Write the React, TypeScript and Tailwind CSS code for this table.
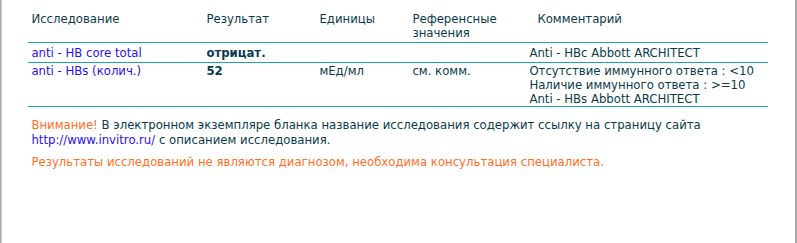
import React from "react";

const rows = [
  {
    name: "anti - HB core total",
    result: "отрицат.",
    units: "",
    ref: "",
    comment: ["Anti - HBc Abbott ARCHITECT"],
  },
  {
    name: "anti - HBs (колич.)",
    result: "52",
    units: "мЕд/мл",
    ref: "см. комм.",
    comment: [
      "Отсутствие иммунного ответа : <10",
      "Наличие иммунного ответа : >=10",
      "Anti - HBs Abbott ARCHITECT",
    ],
  },
];

export default function App() {
  return (
    <div
      className="w-[797px] h-[243px] bg-white flex text-[#0b3b4b] text-[13px] leading-[14px]"
      style={{ fontFamily: '"DejaVu Sans Condensed", "DejaVu Sans", sans-serif' }}
    >
      <div className="w-[3px] bg-gradient-to-r from-[#a0a0a0] to-[#d8d8d8]" />
      <div className="flex-1 pl-[26px] pr-[27px]">
        <div className="w-[740px]">
          <div className="grid grid-cols-[175px_113px_93px_117px_242px] pt-[12px] pb-[2px] border-b border-[#1fa3b3]">
            <div className="pl-[3px]">Исследование</div>
            <div className="pl-[3px]">Результат</div>
            <div className="pl-[3px]">Единицы</div>
            <div className="pl-[3px]">Референсные<br />значения</div>
            <div className="pl-[11px]">Комментарий</div>
          </div>
          {rows.map((r, i) => (
            <div
              key={i}
              className={`grid grid-cols-[175px_113px_93px_117px_242px] border-b border-[#1fa3b3] ${i === 0 ? "pt-[3px] pb-[2px]" : "pt-[1px] pb-0"}`}
            >
              <div className="pl-[3px] text-[#2a10f0]">{r.name}</div>
              <div className="pl-[3px] font-bold">{r.result}</div>
              <div className="pl-[3px]">{r.units}</div>
              <div className="pl-[3px]">{r.ref}</div>
              <div className="pl-[3px]">
                {r.comment.map((c, j) => (
                  <div key={j}>{c}</div>
                ))}
              </div>
            </div>
          ))}
        </div>
        <div className="pl-[3px] pt-[10px] leading-[15px]">
          <p>
            <span className="text-[#ff6f1f]">Внимание!</span> В электронном экземпляре бланка название исследования содержит ссылку на страницу сайта
            <br />
            <span className="text-[#2a10f0]">http://www.invitro.ru/</span> с описанием исследования.
          </p>
          <p className="mt-[7px] text-[#ff6f1f]">
            Результаты исследований не являются диагнозом, необходима консультация специалиста.
          </p>
        </div>
      </div>
      <div className="w-[2px] bg-[#a8a8a8]" />
    </div>
  );
}
